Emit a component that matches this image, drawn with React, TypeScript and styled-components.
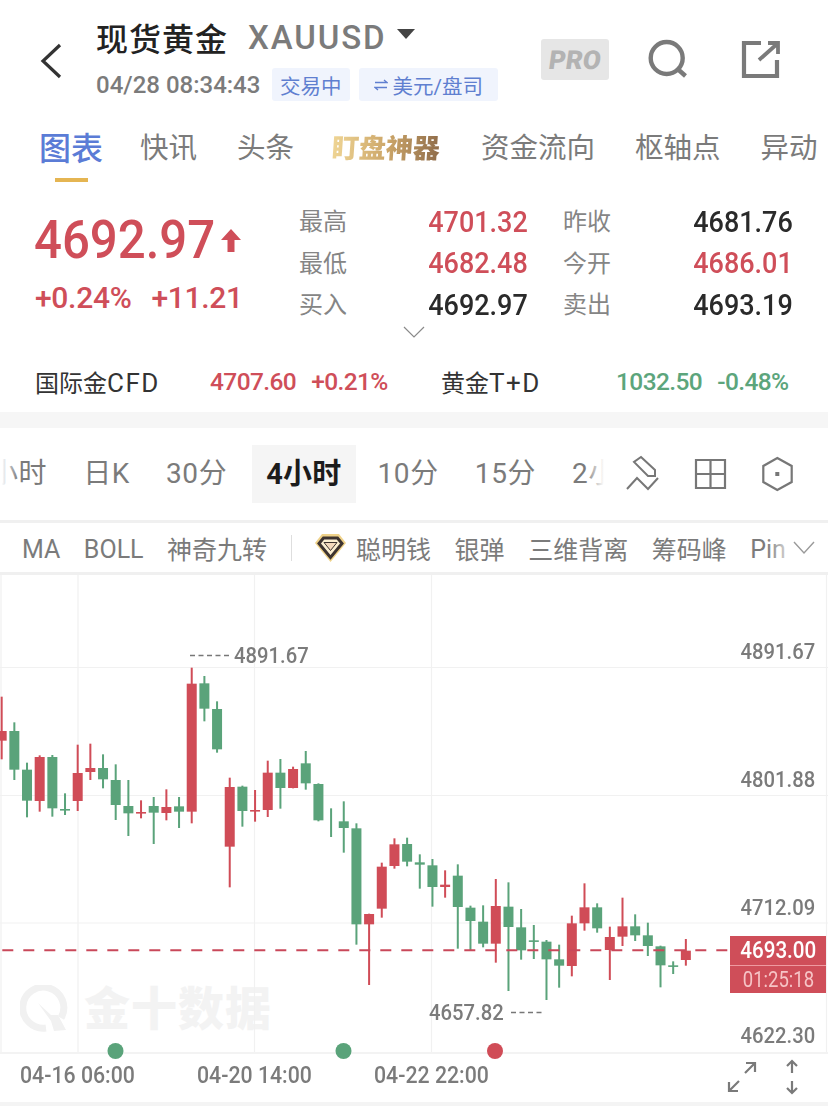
import React from "react";
import styled, { createGlobalStyle } from "styled-components";

const font = `Roboto, "Noto Sans CJK SC", sans-serif`;
const RED = "#cf4e59";
const GREEN = "#5ca57c";
const GREY = "#7b7b7b";

const Global = createGlobalStyle`
  html, body { margin: 0; padding: 0; background: #fff; }
  body { font-family: ${font}; width: 828px; height: 1106px; overflow: hidden; }
`;

const Page = styled.div`
  width: 828px;
  height: 1106px;
  overflow: hidden;
  background: #fff;
  color: #222;
`;

/* ---------- header ---------- */
const Header = styled.header`
  height: 120px;
  display: flex;
  align-items: flex-start;
  padding: 0 0 0 40px;
  box-sizing: border-box;
`;
const BackIcon = styled.svg`
  width: 22px;
  height: 36px;
  margin-top: 43px;
  margin-right: 34px;
  flex: none;
`;
const TitleBlock = styled.div`
  display: flex;
  flex-direction: column;
  padding-top: 17px;
  width: 445px;
`;
const TitleRow = styled.div`
  display: flex;
  align-items: center;
  height: 40px;
`;
const Title = styled.span`
  font-size: 32px;
  font-weight: 500;
  color: #222;
  letter-spacing: 1px;
  margin-right: 20px;
`;
const Symbol = styled.span`
  font-size: 33px;
  font-weight: 500;
  color: ${GREY};
  letter-spacing: 1.9px;
`;
const Caret = styled.span`
  width: 0;
  height: 0;
  margin: -6px 0 0 10px;
  border-left: 9px solid transparent;
  border-right: 9px solid transparent;
  border-top: 10px solid #444;
`;
const SubRow = styled.div`
  display: flex;
  align-items: center;
  margin-top: 11px;
`;
const Time = styled.span`
  font-size: 24px;
  font-weight: 500;
  color: ${GREY};
  margin-right: 11px;
  width: 165px;
  white-space: nowrap;
`;
const Tag = styled.span`
  display: inline-flex;
  align-items: center;
  gap: 5px;
  height: 33px;
  padding: 0 ${(p: { $pad: number }) => p.$pad}px;
  background: #f0f4fd;
  border-radius: 3px;
  color: #5f7fd0;
  font-size: 20.5px;
  margin-right: 9px;
`;
const Actions = styled.div`
  display: flex;
  align-items: flex-start;
  padding-top: 39px;
`;
const ProBadge = styled.span`
  width: 68px;
  height: 41px;
  border-radius: 3px;
  background: #e6e6e6;
  color: #b3b3b3;
  font-size: 26px;
  font-weight: 900;
  display: flex;
  align-items: center;
  justify-content: center;
  margin-right: 38px;
`;
const ProText = styled.span`
  display: inline-block;
  transform: skewX(-8deg);
`;
const ActionIcon = styled.svg`
  width: 44px;
  height: 42px;
  margin-right: ${(p: { $gap: number }) => p.$gap}px;
`;

/* ---------- tabs ---------- */
const Tabs = styled.nav`
  height: 66px;
  display: flex;
  align-items: flex-start;
  gap: 40px;
  padding: 9px 0 0 39px;
  box-sizing: border-box;
  overflow: hidden;
  white-space: nowrap;
`;
const Tab = styled.span<{ $active?: boolean }>`
  position: relative;
  height: 40px;
  line-height: 40px;
  font-size: ${(p) => (p.$active ? 32 : 28.5)}px;
  color: ${(p) => (p.$active ? "#5b7cd6" : GREY)};
  font-weight: ${(p) => (p.$active ? 500 : 400)};
  margin-right: ${(p) => (p.$active ? -3 : 0)}px;
  &::after {
    content: "";
    display: ${(p) => (p.$active ? "block" : "none")};
    position: absolute;
    left: 16px;
    top: 49px;
    width: 33px;
    height: 4px;
    background: #e5b552;
  }
`;
const GoldTab = styled.span`
  display: inline-block;
  height: 40px;
  line-height: 40px;
  font-size: 27px;
  font-weight: 900;
  margin: 0 1px 0 -2px;
  transform: skewX(-4deg);
  background: linear-gradient(90deg, #efd595 0%, #cda769 50%, #8f6c4a 100%);
  -webkit-background-clip: text;
  background-clip: text;
  color: transparent;
`;

/* ---------- quote ---------- */
const Quote = styled.section`
  display: flex;
  padding: 14px 0 0 35px;
  height: 139px;
  box-sizing: border-box;
`;
const PriceCol = styled.div`
  width: 265px;
  flex: none;
`;
const BigLine = styled.div`
  display: flex;
  align-items: center;
  height: 80px;
  margin-left: -1px;
`;
const BigPrice = styled.span`
  display: inline-block;
  width: 181px;
  font-size: 54px;
  font-weight: 500;
  color: ${RED};
  line-height: 80px;
  white-space: nowrap;
  transform: scaleX(0.91);
  transform-origin: left center;
`;
const UpArrow = styled.svg`
  width: 20px;
  height: 24px;
  margin-left: 6px;
`;
const Change = styled.div`
  display: flex;
  gap: 20px;
  font-size: 30px;
  font-weight: 500;
  letter-spacing: -0.3px;
  color: ${RED};
  line-height: 36px;
  white-space: nowrap;
`;
const Stats = styled.div`
  display: grid;
  grid-template-columns: 228px 229px;
  column-gap: 36px;
  grid-auto-rows: 41.5px;
`;
const Stat = styled.div`
  display: flex;
  justify-content: space-between;
  align-items: center;
`;
const StatLabel = styled.span`
  font-size: 24px;
  color: #858585;
  margin: -2px 0 0 -1px;
`;
const StatValue = styled.span<{ $red?: boolean }>`
  display: inline-block;
  font-size: 29.5px;
  font-weight: 500;
  line-height: 32px;
  margin-top: 2px;
  color: ${(p) => (p.$red ? RED : "#2a2a2a")};
  transform: scaleX(0.915);
  transform-origin: right center;
`;
const ChevronRow = styled.div`
  height: 30px;
  display: flex;
  justify-content: center;
  margin-top: -1px;
  padding-top: 2px;
  box-sizing: border-box;
`;
const Chevron = styled.svg`
  width: 22px;
  height: 12px;
`;
const Refs = styled.section`
  height: 58px;
  display: grid;
  grid-template-columns: 175px 231px 175px 1fr;
  align-items: center;
  padding: 0 0 4px 35px;
  box-sizing: border-box;
`;
const RefName = styled.span`
  font-size: 24px;
  color: #333;
  white-space: nowrap;
`;
const RefLatin = styled.span`
  font-size: 26px;
  letter-spacing: 1.5px;
`;
const RefValues = styled.span<{ $green?: boolean }>`
  display: flex;
  gap: 15px;
  font-size: 24.5px;
  font-weight: 500;
  letter-spacing: -0.6px;
  white-space: nowrap;
  color: ${(p) => (p.$green ? GREEN : RED)};
`;
const Band = styled.div`
  height: 16px;
  background: #f6f6f6;
`;

/* ---------- timeframes ---------- */
const FrameBar = styled.div`
  height: 92px;
  display: flex;
  align-items: center;
  overflow: hidden;
  border-bottom: 3px solid #f0f0f0;
`;
const FrameScroll = styled.div`
  position: relative;
  width: 629px;
  flex: none;
  display: flex;
  align-items: center;
  gap: 8px;
  overflow: hidden;
  margin-left: -24px;
  margin-right: 21px;
  white-space: nowrap;
  &::before,
  &::after {
    content: "";
    position: absolute;
    top: 0;
    bottom: 0;
    z-index: 1;
  }
  &::before {
    left: 24px;
    width: 18px;
    background: linear-gradient(90deg, #fff 10%, rgba(255, 255, 255, 0));
  }
  &::after {
    right: 0;
    width: 20px;
    background: linear-gradient(270deg, #fff 5%, rgba(255, 255, 255, 0));
  }
`;
const Frame = styled.span<{ $active?: boolean }>`
  flex: none;
  height: 58px;
  line-height: 58px;
  padding: 0 14px;
  margin-left: ${(p) => (p.$active ? 3 : 0)}px;
  font-size: ${(p) => (p.$active ? 29 : 28)}px;
  font-weight: ${(p) => (p.$active ? 700 : 400)};
  color: ${(p) => (p.$active ? "#1c1c1c" : GREY)};
  background: ${(p) => (p.$active ? "#f5f5f5" : "transparent")};
  letter-spacing: ${(p) => (p.$active ? 0.2 : 0.6)}px;
`;
const Tools = styled.div`
  display: flex;
  gap: 34px;
`;
const ToolIcon = styled.svg`
  width: 34px;
  height: 36px;
  flex: none;
  overflow: visible;
`;

/* ---------- indicators ---------- */
const IndicatorBar = styled.div`
  position: relative;
  height: 49px;
  display: flex;
  align-items: center;
  gap: 23.5px;
  padding-left: 22px;
  overflow: hidden;
  white-space: nowrap;
  border-bottom: 3px solid #f0f0f0;
  font-size: 25px;
  color: ${GREY};
`;
const Indicator = styled.span<{ $latin?: boolean }>`
  flex: none;
  padding-top: ${(p) => (p.$latin ? 3 : 0)}px;
`;
const Sep = styled.span`
  flex: none;
  width: 1px;
  height: 26px;
  background: #dedede;
`;
const GemWrap = styled.span`
  flex: none;
  display: flex;
  align-items: center;
  gap: 10px;
`;
const Gem = styled.svg`
  width: 31px;
  height: 29px;
`;
const PinFade = styled.span`
  position: absolute;
  right: 0;
  top: 0;
  bottom: 0;
  width: 62px;
  display: flex;
  align-items: center;
  background: linear-gradient(90deg, rgba(255, 255, 255, 0), #fff 50%);
`;
const PinChevron = styled.svg`
  width: 22px;
  height: 14px;
  margin-left: 27px;
`;

/* ---------- chart ---------- */
const Chart = styled.div`
  position: relative;
  height: 477px;
  overflow: visible;
`;
const ChartSvg = styled.svg`
  position: absolute;
  left: 0;
  top: 0;
  overflow: visible;
`;
const Watermark = styled.div`
  position: absolute;
  left: 20px;
  top: 410px;
  display: flex;
  align-items: center;
  gap: 16px;
`;
const WaterIcon = styled.svg`
  width: 48px;
  height: 48px;
`;
const WaterText = styled.span`
  font-size: 46px;
  font-weight: 900;
  color: #f3f3f3;
  letter-spacing: 1px;
  line-height: 48px;
`;
const AxisLabel = styled.span<{ $top: number }>`
  position: absolute;
  right: 13px;
  top: ${(p) => p.$top}px;
  font-size: 22px;
  font-weight: 500;
  line-height: 26px;
  color: ${GREY};
  transform: scaleX(0.92);
  transform-origin: right center;
`;
const Extreme = styled.span<{ $left: number; $top: number }>`
  position: absolute;
  left: ${(p) => p.$left}px;
  top: ${(p) => p.$top}px;
  font-size: 22px;
  font-weight: 500;
  line-height: 26px;
  color: ${GREY};
  white-space: nowrap;
  transform: scaleX(0.92);
  transform-origin: left center;
`;
const PriceTag = styled.div`
  position: absolute;
  left: 730px;
  top: 361px;
  width: 96px;
  height: 57px;
  background: ${RED};
  display: flex;
  flex-direction: column;
  align-items: center;
`;
const TagPrice = styled.div`
  height: 29px;
  line-height: 29px;
  width: 100%;
  text-align: center;
  font-size: 24px;
  font-weight: 500;
  color: #fff;
  border-bottom: 1px solid #ee9aa0;
`;
const TagTime = styled.div`
  line-height: 27px;
  font-size: 21.5px;
  color: #f6c4c6;
`;
const Squeeze = styled.span`
  display: inline-block;
  transform: scaleX(0.86);
`;

/* ---------- axis ---------- */
const AxisRow = styled.div`
  height: 50px;
  display: flex;
  align-items: center;
  gap: 62px;
  padding: 0 0 5px 20px;
  box-sizing: border-box;
  border-top: 2px solid #f3f3f3;
  font-size: 23px;
  font-weight: 500;
  color: ${GREY};
  white-space: nowrap;
`;
const AxisDate = styled.span`
  display: inline-block;
  width: 115px;
  transform: scaleX(0.925);
  transform-origin: left center;
`;
const AxisIcons = styled.div`
  margin-left: 176px;
  margin-top: 2px;
  display: flex;
  gap: 28px;
`;
const AxisIcon = styled.svg`
  flex: none;
  height: 36px;
`;
const Bottom = styled.div`
  height: 5px;
  background: #f4f4f4;
`;

type C = [string, number, number, number, number];
const R = "r";
const G = "g";
const groupA: C[] = [
  [R, 170, 358, 273, 302], [G, 247, 420, 273, 389], [G, 368, 532, 389, 482], [R, 346, 515, 351, 483],
  [G, 345, 530, 351, 505], [G, 460, 525, 507, 511], [R, 314, 513, 399, 483], [R, 311, 420, 384, 396],
  [G, 343, 445, 384, 418], [G, 373, 540, 420, 495], [G, 420, 588, 498, 520], [R, 481, 535, 516, 520],
  [G, 471, 612, 498, 518], [R, 448, 541, 501, 519], [G, 471, 564, 499, 515], [R, 83, 550, 131, 515],
  [G, 108, 244, 130, 206], [G, 184, 338, 207, 328], [R, 413, 742, 441, 620], [G, 437, 560, 440, 513],
  [R, 450, 545, 510, 513], [R, 362, 531, 398, 510],
];
const groupB: C[] = [
  [G, 57, 206, 98, 144], [R, 80, 145, 87, 144], [G, 33, 149, 70, 130], [G, 130, 244, 132, 241],
  [G, 205, 291, 247, 247], [G, 184, 338, 244, 264], [G, 250, 614, 265, 553], [R, 521, 735, 522, 553],
  [R, 368, 533, 380, 506], [R, 295, 386, 313, 378], [G, 293, 379, 312, 365], [G, 343, 446, 367, 374],
  [G, 357, 500, 376, 441], [R, 391, 473, 434, 441], [G, 373, 626, 407, 501], [G, 497, 632, 503, 543],
  [G, 496, 622, 545, 611], [R, 417, 668, 498, 611], [G, 427, 753, 500, 561], [G, 507, 659, 562, 631],
  [G, 555, 657, 601, 604],
];
const groupC: C[] = [
  [G, 240, 420, 245, 298], [G, 254, 383, 298, 317], [R, 167, 349, 190, 318], [R, 70, 212, 142, 190],
  [G, 130, 218, 142, 205], [R, 200, 360, 231, 270], [R, 113, 258, 199, 230], [G, 163, 243, 199, 226],
  [G, 188, 288, 226, 258], [G, 257, 382, 259, 316], [G, 304, 342, 316, 318], [R, 237, 317, 272, 300],
];
const TOP = 575;
const toY = (base: number, v: number) => base + v / 3 - TOP;
const candles = [
  ...groupA.map((c) => ({ c, base: 640 })),
  ...groupB.map((c) => ({ c, base: 740 })),
  ...groupC.map((c) => ({ c, base: 860 })),
];

const yLabels: [string, number][] = [
  ["4891.67", 64],
  ["4801.88", 192],
  ["4712.09", 320],
  ["4622.30", 448],
];

export default function App() {
  return (
    <Page>
      <Global />
      <Header>
        <BackIcon viewBox="0 0 22 36" fill="none">
          <path d="M20 2 L3 18 L20 34" stroke="#333" strokeWidth="3.2" />
        </BackIcon>
        <TitleBlock>
          <TitleRow>
            <Title>现货黄金</Title>
            <Symbol>XAUUSD</Symbol>
            <Caret />
          </TitleRow>
          <SubRow>
            <Time>04/28 08:34:43</Time>
            <Tag $pad={8}>交易中</Tag>
            <Tag $pad={15}>
              <svg width="14" height="14" viewBox="0 0 14 14" fill="none">
                <path d="M1 4.5 H13 L10 2 M13 9.5 H1 L4 12" stroke="#5f7fd0" strokeWidth="1.3" />
              </svg>
              美元/盘司
            </Tag>
          </SubRow>
        </TitleBlock>
        <Actions>
          <ProBadge><ProText>PRO</ProText></ProBadge>
          <ActionIcon $gap={49} viewBox="0 0 44 42" fill="none">
            <circle cx="19.7" cy="19" r="16" stroke="#7a7a7a" strokeWidth="4.4" />
            <path d="M29.5 29 L38.5 37" stroke="#7a7a7a" strokeWidth="4.4" />
          </ActionIcon>
          <ActionIcon $gap={0} viewBox="0 0 44 42" fill="none">
            <path d="M21 4 H4 V37 H37 V21" stroke="#7a7a7a" strokeWidth="4.2" />
            <path d="M19 21 L37 5 M28 4 H38 V15" stroke="#7a7a7a" strokeWidth="3.8" />
          </ActionIcon>
        </Actions>
      </Header>

      <Tabs>
        <Tab $active>图表</Tab>
        <Tab>快讯</Tab>
        <Tab>头条</Tab>
        <GoldTab>盯盘神器</GoldTab>
        <Tab>资金流向</Tab>
        <Tab>枢轴点</Tab>
        <Tab>异动</Tab>
      </Tabs>

      <Quote>
        <PriceCol>
          <BigLine>
            <BigPrice>4692.97</BigPrice>
            <UpArrow viewBox="0 0 20 24">
              <path d="M10 1 L20 12 H13.5 V24 H6.5 V12 H0 Z" fill={RED} />
            </UpArrow>
          </BigLine>
          <Change>
            <span>+0.24%</span>
            <span>+11.21</span>
          </Change>
        </PriceCol>
        <Stats>
          <Stat><StatLabel>最高</StatLabel><StatValue $red>4701.32</StatValue></Stat>
          <Stat><StatLabel>昨收</StatLabel><StatValue>4681.76</StatValue></Stat>
          <Stat><StatLabel>最低</StatLabel><StatValue $red>4682.48</StatValue></Stat>
          <Stat><StatLabel>今开</StatLabel><StatValue $red>4686.01</StatValue></Stat>
          <Stat><StatLabel>买入</StatLabel><StatValue>4692.97</StatValue></Stat>
          <Stat><StatLabel>卖出</StatLabel><StatValue>4693.19</StatValue></Stat>
        </Stats>
      </Quote>
      <ChevronRow>
        <Chevron viewBox="0 0 22 12" fill="none">
          <path d="M1 1 L11 11 L21 1" stroke="#8a8a8a" strokeWidth="1.2" />
        </Chevron>
      </ChevronRow>
      <Refs>
        <RefName>国际金<RefLatin>CFD</RefLatin></RefName>
        <RefValues>
          <span>4707.60</span>
          <span>+0.21%</span>
        </RefValues>
        <RefName>黄金<RefLatin>T+D</RefLatin></RefName>
        <RefValues $green>
          <span>1032.50</span>
          <span>-0.48%</span>
        </RefValues>
      </Refs>
      <Band />

      <FrameBar>
        <FrameScroll>
          <Frame>小时</Frame>
          <Frame>日K</Frame>
          <Frame>30分</Frame>
          <Frame $active>4小时</Frame>
          <Frame>10分</Frame>
          <Frame>15分</Frame>
          <Frame>2小时</Frame>
        </FrameScroll>
        <Tools>
          <ToolIcon viewBox="0 0 34 36" fill="none" stroke="#777" strokeWidth="2">
            <path d="M15 1 L29 14 V20 H22 L8 6 Z" />
            <path d="M1 33 L11 22 L22 33 L32 22" />
          </ToolIcon>
          <ToolIcon viewBox="0 0 34 36" fill="none" stroke="#777" strokeWidth="2.2">
            <path d="M2 4 H31 V32 H2 Z M16.5 4 V32 M2 18 H31" />
          </ToolIcon>
          <ToolIcon viewBox="0 0 34 36" fill="none" stroke="#777" strokeWidth="2.2">
            <path d="M15.3 2 L29.7 10 V26 L15.3 34 L1.3 26 V10 Z" />
            <rect x="13.3" y="16" width="4" height="4" fill="#777" stroke="none" />
          </ToolIcon>
        </Tools>
      </FrameBar>

      <IndicatorBar>
        <Indicator $latin>MA</Indicator>
        <Indicator $latin>BOLL</Indicator>
        <Indicator>神奇九转</Indicator>
        <Sep />
        <GemWrap>
          <Gem viewBox="0 0 31 29">
            <path d="M7 1 H24 L31 10 L15.5 29 L0 10 Z" fill="#efd28a" />
            <path d="M8.5 5 H22.5 L27 10.5 L15.5 24.5 L4 10.5 Z" fill="#fbeed0" stroke="#3d3330" strokeWidth="3" />
            <path d="M9 9.5 H22 L15.5 17.5 Z" fill="#f3d9bd" stroke="#3d3330" strokeWidth="1" />
          </Gem>
          聪明钱
        </GemWrap>
        <Indicator>银弹</Indicator>
        <Indicator>三维背离</Indicator>
        <Indicator>筹码峰</Indicator>
        <Indicator $latin>Pin</Indicator>
        <PinFade>
          <PinChevron viewBox="0 0 22 14" fill="none">
            <path d="M1 1 L11 12 L21 1" stroke="#9a9a9a" strokeWidth="1.4" />
          </PinChevron>
        </PinFade>
      </IndicatorBar>

      <Chart>
        <Watermark>
          <WaterIcon viewBox="0 0 48 48" fill="none">
            <path d="M41 33 A20.5 20.5 0 1 0 26 43" stroke="#f1f1f1" strokeWidth="7" />
            <path d="M18 18 L31 30 L38 30 L46 45 L34 46 L31 36 Z" fill="#f1f1f1" />
          </WaterIcon>
          <WaterText>金十数据</WaterText>
        </Watermark>
        <ChartSvg width="828" height="477" viewBox="0 0 828 477">
          <path d="M1 0 V477 M826.5 0 V477 M78 0 V477 M254.5 0 V477 M431.5 0 V477" stroke="#f1f1f1" strokeWidth="1.2" />
          <path d="M0 92.5 H828 M0 220.5 H828 M0 348 H828" stroke="#f1f1f1" strokeWidth="1.2" />
          {candles.map(({ c, base }, i) => {
            const x = 1.67 + 12.67 * i;
            const col = c[0] === R ? "#d04c57" : "#5aa37a";
            const bt = toY(base, c[3]);
            const bb = toY(base, c[4]);
            return (
              <g key={i} fill={col}>
                <rect x={x - 1} y={toY(base, c[1])} width="2" height={toY(base, c[2]) - toY(base, c[1])} />
                {c[4] > c[3] && <rect x={x - 5} y={bt} width="10" height={Math.max(bb - bt, 1.6)} />}
              </g>
            );
          })}
          <line x1="2.3" x2="730" y1="375.3" y2="375.3" stroke="#c9485a" strokeWidth="2" strokeDasharray="11 10" />
          <path d="M190 80.5 H230 M511 437.5 H542" stroke="#777" strokeWidth="1.6" strokeDasharray="5 3.5" />
          <circle cx="115.5" cy="476" r="8" fill="#5aa37a" />
          <circle cx="343.5" cy="476" r="8" fill="#5aa37a" />
          <circle cx="495" cy="476" r="8" fill="#d04c57" />
        </ChartSvg>
        {yLabels.map(([t, y]) => (
          <AxisLabel key={t} $top={y}>{t}</AxisLabel>
        ))}
        <Extreme $left={234} $top={68}>4891.67</Extreme>
        <Extreme $left={429} $top={425}>4657.82</Extreme>
        <PriceTag>
          <TagPrice><Squeeze>4693.00</Squeeze></TagPrice>
          <TagTime><Squeeze>01:25:18</Squeeze></TagTime>
        </PriceTag>
      </Chart>

      <AxisRow>
        <AxisDate>04-16 06:00</AxisDate>
        <AxisDate>04-20 14:00</AxisDate>
        <AxisDate>04-22 22:00</AxisDate>
        <AxisIcons>
          <AxisIcon width="30" viewBox="0 0 30 36" fill="none" stroke="#7a7a7a" strokeWidth="2.2">
            <path d="M2 32 L12 22 M2 23 V32 H11 M18 14 L28 4 M19 4 H28 V13" />
          </AxisIcon>
          <AxisIcon width="14" viewBox="0 0 14 36" fill="none" stroke="#7a7a7a" strokeWidth="2.2">
            <path d="M7 2 V14 M2 7 L7 2 L12 7 M7 22 V34 M2 29 L7 34 L12 29" />
          </AxisIcon>
        </AxisIcons>
      </AxisRow>
      <Bottom />
    </Page>
  );
}
